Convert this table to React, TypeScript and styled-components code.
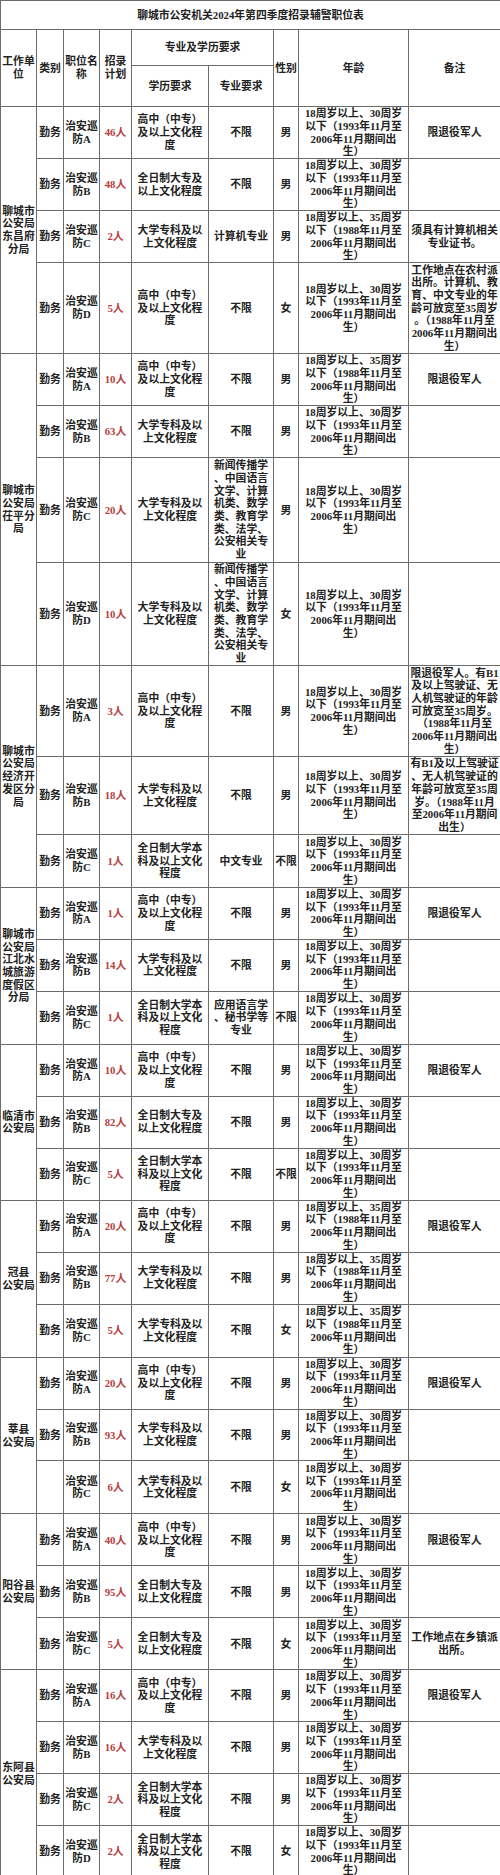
import React from "react";
import styled, { createGlobalStyle } from "styled-components";

const GlobalStyle = createGlobalStyle`
  html, body {
    margin: 0;
    padding: 0;
    background: #ffffff;
  }
`;

const LINE = "#6b6b6b";

const Sheet = styled.table`
  width: 500px;
  table-layout: fixed;
  border-collapse: collapse;
  font-family: "Liberation Serif", "Noto Sans CJK SC", serif;
  font-size: 10.8px;
  line-height: 12.7px;
  font-weight: 700;
  color: #222222;
`;

const Col = styled.col<{ $w: number }>`
  width: ${(p) => p.$w}px;
`;

const Row = styled.tr<{ $h: number }>`
  height: ${(p) => p.$h}px;
`;

const TitleCell = styled.th`
  border: 1px solid ${LINE};
  padding: 0;
  text-align: center;
  vertical-align: middle;
  font-weight: 700;
  white-space: nowrap;
`;

const HeadCell = styled.th`
  border: 1px solid ${LINE};
  padding: 0 1px;
  text-align: center;
  vertical-align: middle;
  font-weight: 700;
  white-space: nowrap;
`;

const Cell = styled.td<{ $red?: boolean }>`
  border: 1px solid ${LINE};
  padding: 0 1px;
  text-align: center;
  vertical-align: middle;
  white-space: nowrap;
  color: ${(p) => (p.$red ? "#b5403e" : "#222222")};
`;

interface Post {
  kind: string;
  post: string;
  count: string;
  edu: string[];
  major: string[];
  sex: string;
  age: string[];
  note: string[];
  h: number;
}

interface Unit {
  name: string[];
  posts: Post[];
}

const AGE30 = ["18周岁以上、30周岁", "以下（1993年11月至", "2006年11月期间出", "生）"];
const AGE35 = ["18周岁以上、35周岁", "以下（1988年11月至", "2006年11月期间出", "生）"];

const HIGH = ["高中（中专）", "及以上文化程", "度"];
const COLLEGE = ["大学专科及以", "上文化程度"];
const FULLTIME = ["全日制大专及", "以上文化程度"];
const BACHELOR = ["全日制大学本", "科及以上文化", "程度"];
const ANY = ["不限"];
const VETERAN = ["限退役军人"];
const MAJORS = [
  "新闻传播学",
  "、中国语言",
  "文学、计算",
  "机类、数学",
  "类、教育学",
  "类、法学、",
  "公安相关专",
  "业",
];

const post = (
  letter: string,
  count: string,
  edu: string[],
  sex: string,
  age: string[],
  note: string[],
  h: number,
  major: string[] = ANY,
  kind = "勤务"
): Post => ({ kind, post: "治安巡防" + letter, count, edu, major, sex, age, note, h });

const units: Unit[] = [
  {
    name: ["聊城市", "公安局", "东昌府", "分局"],
    posts: [
      post("A", "46人", HIGH, "男", AGE30, VETERAN, 52),
      post("B", "48人", FULLTIME, "男", AGE30, [], 52),
      post("C", "2人", COLLEGE, "男", AGE35, ["须具有计算机相关", "专业证书。"], 52, ["计算机专业"]),
      post(
        "D",
        "5人",
        HIGH,
        "女",
        AGE30,
        [
          "工作地点在农村派",
          "出所。计算机、教",
          "育、中文专业的年",
          "龄可放宽至35周岁",
          "。（1988年11月至",
          "2006年11月期间出",
          "生）",
        ],
        91
      ),
    ],
  },
  {
    name: ["聊城市", "公安局", "茌平分", "局"],
    posts: [
      post("A", "10人", HIGH, "男", AGE35, VETERAN, 52),
      post("B", "63人", COLLEGE, "男", AGE30, [], 52),
      post("C", "20人", COLLEGE, "男", AGE30, [], 105, MAJORS),
      post("D", "10人", COLLEGE, "女", AGE30, [], 103, MAJORS),
    ],
  },
  {
    name: ["聊城市", "公安局", "经济开", "发区分", "局"],
    posts: [
      post(
        "A",
        "3人",
        HIGH,
        "男",
        AGE30,
        [
          "限退役军人。有B1",
          "及以上驾驶证、无",
          "人机驾驶证的年龄",
          "可放宽至35周岁。",
          "（1988年11月至",
          "2006年11月期间出",
          "生）",
        ],
        91
      ),
      post(
        "B",
        "18人",
        COLLEGE,
        "男",
        AGE30,
        [
          "有B1及以上驾驶证",
          "、无人机驾驶证的",
          "年龄可放宽至35周",
          "岁。（1988年11月",
          "至2006年11月期间",
          "出生）",
        ],
        78
      ),
      post("C", "1人", BACHELOR, "不限", AGE30, [], 53, ["中文专业"]),
    ],
  },
  {
    name: ["聊城市", "公安局", "江北水", "城旅游", "度假区", "分局"],
    posts: [
      post("A", "1人", HIGH, "男", AGE30, VETERAN, 51),
      post("B", "14人", COLLEGE, "男", AGE30, [], 52),
      post("C", "1人", BACHELOR, "不限", AGE30, [], 53, ["应用语言学", "、秘书学等", "专业"]),
    ],
  },
  {
    name: ["临清市", "公安局"],
    posts: [
      post("A", "10人", HIGH, "男", AGE30, VETERAN, 51),
      post("B", "82人", FULLTIME, "男", AGE30, [], 52),
      post("C", "5人", BACHELOR, "不限", AGE30, [], 52),
    ],
  },
  {
    name: ["冠县", "公安局"],
    posts: [
      post("A", "20人", HIGH, "男", AGE35, VETERAN, 52),
      post("B", "77人", COLLEGE, "男", AGE35, [], 52),
      post("C", "5人", COLLEGE, "女", AGE35, [], 53),
    ],
  },
  {
    name: ["莘县", "公安局"],
    posts: [
      post("A", "20人", HIGH, "男", AGE30, VETERAN, 52),
      post("B", "93人", COLLEGE, "男", AGE30, [], 51),
      post("C", "6人", COLLEGE, "女", AGE30, [], 53, ANY, ""),
    ],
  },
  {
    name: ["阳谷县", "公安局"],
    posts: [
      post("A", "40人", HIGH, "男", AGE30, VETERAN, 52),
      post("B", "95人", FULLTIME, "男", AGE30, [], 52),
      post("C", "5人", FULLTIME, "女", AGE30, ["工作地点在乡镇派", "出所。"], 52),
    ],
  },
  {
    name: ["东阿县", "公安局"],
    posts: [
      post("A", "16人", HIGH, "男", AGE30, VETERAN, 51),
      post("B", "16人", COLLEGE, "男", AGE30, [], 52),
      post("C", "2人", BACHELOR, "男", AGE30, [], 52),
      post("D", "2人", BACHELOR, "女", AGE30, [], 51),
    ],
  },
];

const widths = [36, 27, 36, 32, 77, 65, 25, 110, 92];

function Lines({ items }: { items: string[] }) {
  return (
    <>
      {items.map((t, i) => (
        <React.Fragment key={i}>
          {i > 0 && <br />}
          {t}
        </React.Fragment>
      ))}
    </>
  );
}

export default function App() {
  return (
    <>
      <GlobalStyle />
      <Sheet>
        <colgroup>
          {widths.map((w, i) => (
            <Col key={i} $w={w} />
          ))}
        </colgroup>
        <thead>
          <Row $h={29}>
            <TitleCell colSpan={9}>聊城市公安机关2024年第四季度招录辅警职位表</TitleCell>
          </Row>
          <Row $h={36}>
            <HeadCell rowSpan={2}>
              <Lines items={["工作单", "位"]} />
            </HeadCell>
            <HeadCell rowSpan={2}>类别</HeadCell>
            <HeadCell rowSpan={2}>
              <Lines items={["职位名", "称"]} />
            </HeadCell>
            <HeadCell rowSpan={2}>
              <Lines items={["招录", "计划"]} />
            </HeadCell>
            <HeadCell colSpan={2}>专业及学历要求</HeadCell>
            <HeadCell rowSpan={2}>性别</HeadCell>
            <HeadCell rowSpan={2}>年龄</HeadCell>
            <HeadCell rowSpan={2}>备注</HeadCell>
          </Row>
          <Row $h={41}>
            <HeadCell>学历要求</HeadCell>
            <HeadCell>专业要求</HeadCell>
          </Row>
        </thead>
        <tbody>
          {units.map((u, ui) =>
            u.posts.map((p, pi) => (
              <Row key={`${ui}-${pi}`} $h={p.h}>
                {pi === 0 && (
                  <Cell rowSpan={u.posts.length}>
                    <Lines items={u.name} />
                  </Cell>
                )}
                <Cell>{p.kind}</Cell>
                <Cell>
                  <Lines items={[p.post.slice(0, 3), p.post.slice(3)]} />
                </Cell>
                <Cell $red>{p.count}</Cell>
                <Cell>
                  <Lines items={p.edu} />
                </Cell>
                <Cell>
                  <Lines items={p.major} />
                </Cell>
                <Cell>{p.sex}</Cell>
                <Cell>
                  <Lines items={p.age} />
                </Cell>
                <Cell>
                  <Lines items={p.note} />
                </Cell>
              </Row>
            ))
          )}
        </tbody>
      </Sheet>
    </>
  );
}
